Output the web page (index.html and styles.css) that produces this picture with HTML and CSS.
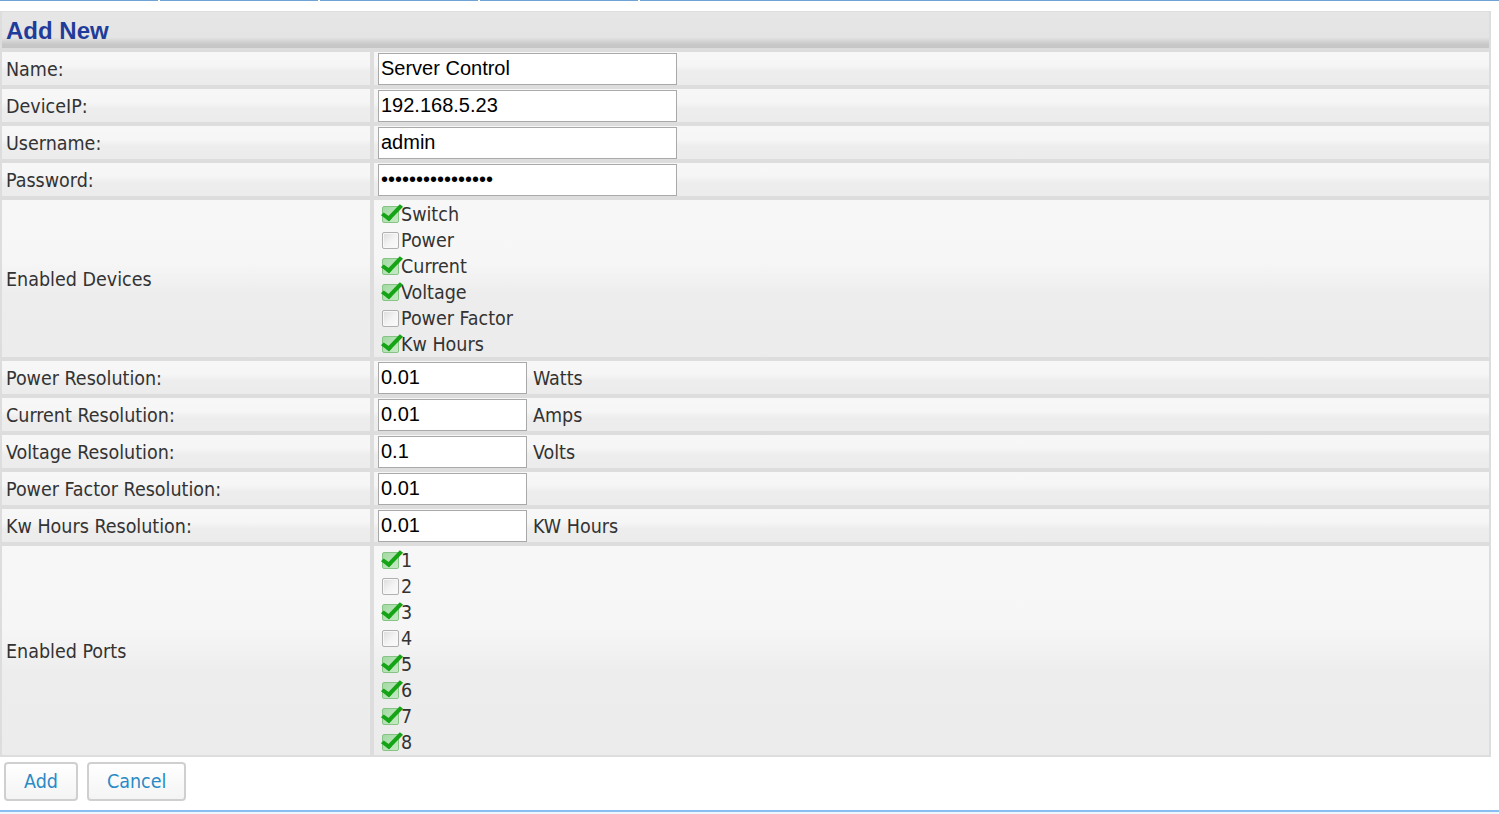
FILE: index.html
```html
<!DOCTYPE html>
<html>
<head>
<meta charset="utf-8">
<title>Add New</title>
<link rel="stylesheet" href="styles.css">
</head>
<body>
<div class="tabs"><span class="tab"></span><span class="tab"></span><span class="tab"></span><span class="tab"></span><span class="tab-rest"></span></div>

<div class="form">
  <div class="form-head">Add New</div>

  <div class="lbl">Name:</div>
  <div class="val"><input class="txt wide" type="text" value="Server Control"></div>

  <div class="lbl">DeviceIP:</div>
  <div class="val"><input class="txt wide" type="text" value="192.168.5.23"></div>

  <div class="lbl">Username:</div>
  <div class="val"><input class="txt wide" type="text" value="admin"></div>

  <div class="lbl">Password:</div>
  <div class="val"><input class="txt wide pw" type="password" value="abcdefghijklmnop"></div>

  <div class="lbl">Enabled Devices</div>
  <div class="val list">
    <label class="chk"><span class="box on"></span><span class="ct">Switch</span></label>
    <label class="chk"><span class="box"></span><span class="ct">Power</span></label>
    <label class="chk"><span class="box on"></span><span class="ct">Current</span></label>
    <label class="chk"><span class="box on"></span><span class="ct">Voltage</span></label>
    <label class="chk"><span class="box"></span><span class="ct">Power Factor</span></label>
    <label class="chk"><span class="box on"></span><span class="ct">Kw Hours</span></label>
  </div>

  <div class="lbl">Power Resolution:</div>
  <div class="val"><input class="txt short" type="text" value="0.01"><span class="unit">Watts</span></div>

  <div class="lbl">Current Resolution:</div>
  <div class="val"><input class="txt short" type="text" value="0.01"><span class="unit">Amps</span></div>

  <div class="lbl">Voltage Resolution:</div>
  <div class="val"><input class="txt short" type="text" value="0.1"><span class="unit">Volts</span></div>

  <div class="lbl">Power Factor Resolution:</div>
  <div class="val"><input class="txt short" type="text" value="0.01"></div>

  <div class="lbl">Kw Hours Resolution:</div>
  <div class="val"><input class="txt short" type="text" value="0.01"><span class="unit">KW Hours</span></div>

  <div class="lbl">Enabled Ports</div>
  <div class="val list">
    <label class="chk"><span class="box on"></span><span class="ct">1</span></label>
    <label class="chk"><span class="box"></span><span class="ct">2</span></label>
    <label class="chk"><span class="box on"></span><span class="ct">3</span></label>
    <label class="chk"><span class="box"></span><span class="ct">4</span></label>
    <label class="chk"><span class="box on"></span><span class="ct">5</span></label>
    <label class="chk"><span class="box on"></span><span class="ct">6</span></label>
    <label class="chk"><span class="box on"></span><span class="ct">7</span></label>
    <label class="chk"><span class="box on"></span><span class="ct">8</span></label>
  </div>
</div>

<div class="actions">
  <button class="btn">Add</button>
  <button class="btn">Cancel</button>
</div>
<div class="bottom-line"></div>
</body>
</html>
```

FILE: styles.css
```css
html, body {
  margin: 0;
  padding: 0;
  background: #ffffff;
}
body {
  width: 1499px;
  height: 814px;
  overflow: hidden;
  font-family: "DejaVu Sans", sans-serif;
  font-stretch: condensed;
}

.tabs {
  display: flex;
  height: 1px;
  margin-bottom: 10px;
}
.tab {
  width: 158px;
  margin-right: 2px;
  background: #6fa3d6;
}
.tab-rest {
  flex: 1;
  background: #6fa3d6;
}

.form {
  width: 1487px;
  background: #dddddd;
  padding: 1px 2px 2px 2px;
  display: grid;
  grid-template-columns: 368px 1115px;
  column-gap: 4px;
  row-gap: 4px;
}
.form-head {
  grid-column: 1 / span 2;
  height: 36px;
  box-sizing: border-box;
  padding: 5px 0 0 4px;
  font-family: "Liberation Sans", Arial, sans-serif;
  font-stretch: normal;
  font-weight: bold;
  font-size: 24px;
  line-height: 28px;
  color: #1f3c9b;
  background: linear-gradient(to bottom, #e6e6e6 0%, #e4e4e4 70%, #c8c8c8 90%, #c6c6c6 100%);
}

.lbl, .val {
  background: linear-gradient(to bottom, #f7f7f7 0%, #f6f6f6 40%, #ededed 60%, #ececec 100%);
  min-height: 33px;
  box-sizing: border-box;
  display: flex;
  align-items: center;
}
.lbl {
  padding: 2px 0 0 4px;
  font-size: 19.5px;
  color: #333333;
}
.val {
  padding-left: 4px;
  font-size: 19.5px;
  color: #333333;
}

.txt {
  box-sizing: border-box;
  height: 32px;
  margin: 0;
  border: 1px solid #a9a9a9;
  padding: 0 2px;
  font-family: "Liberation Sans", Arial, sans-serif;
  font-stretch: normal;
  font-size: 20px;
  color: #000000;
  background: #ffffff;
  outline: none;
}
.wide { width: 299px; }
.short { width: 149px; }
.pw { font-size: 20px; letter-spacing: 0; }

.unit {
  margin-left: 6px;
  padding-top: 1px;
}

.list {
  flex-direction: column;
  align-items: flex-start;
  padding-top: 1px;
  padding-bottom: 0;
}
.chk {
  display: flex;
  align-items: center;
  height: 26px;
  line-height: 26px;
  padding-left: 4px;
}
.ct {
  padding-top: 2px;
}
.box {
  position: relative;
  width: 17px;
  height: 17px;
  margin-right: 2px;
  box-sizing: border-box;
  border: 1px solid #b0b0b0;
  border-radius: 2px;
  background: linear-gradient(135deg, #dcdcdc 0%, #f4f4f4 55%, #fbfbfb 100%);
  box-shadow: inset 0 0 0 1px #f8f8f8;
}
.box.on {
  border-color: #86c486;
  background: linear-gradient(135deg, #a3d9a3 0%, #c6eac6 100%);
  box-shadow: none;
}
.box.on::after {
  content: "";
  position: absolute;
  left: 4px;
  top: -6px;
  width: 6px;
  height: 16px;
  border-right: 4px solid #15a415;
  border-bottom: 4px solid #15a415;
  transform: rotate(36deg) skewX(-8deg);
  transform-origin: center;
}

.actions {
  display: flex;
  gap: 9px;
  padding: 5px 0 0 4px;
  height: 44px;
  box-sizing: border-box;
}
.btn {
  height: 39px;
  padding: 0 18px;
  border: 2px solid #cfcfcf;
  border-radius: 4px;
  background: linear-gradient(to bottom, #ffffff 0%, #f4f4f4 100%);
  font-family: "DejaVu Sans", sans-serif;
  font-stretch: condensed;
  font-size: 19.5px;
  color: #2a8ac6;
}

.bottom-line {
  margin-top: 9px;
  height: 2px;
  background: #88bff0;
  border-bottom: 2px solid #f0f6fc;
}
```
